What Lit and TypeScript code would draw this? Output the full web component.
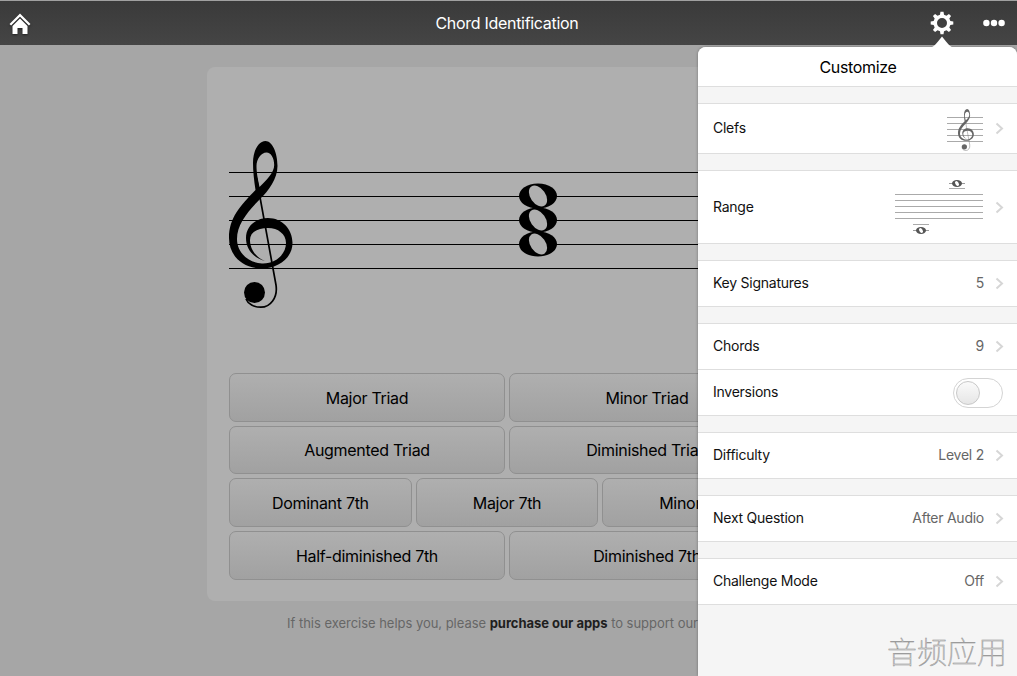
import { LitElement, html, css, svg } from "lit";
import { customElement } from "lit/decorators.js";

const CLEF = svg`
  <path fill-rule="evenodd" d="M265 261C254 258 246 250 246 238C246 226 256 218 268 218C282 218 292.5 229 292.5 243C292.5 258 278 268.5 262 268.5C243 268.5 229 256 229 238C229 218 240 206 255.5 190C254 180 253 171 253 163C253 150 259 141 265.5 141C272 141 277.5 152 277.5 166C277.5 179 268 191 261 198C248 211 237 224 237 239C237 253 249 263 262 263.5C276 264 286 254 286 243C286 234 278 228 268 228C258 228 250 232 250 240C250 250 257 258 265 261ZM266.5 152.5C261 152.5 256.5 159 256.5 166C256.5 172 257.5 178 259.5 187C267 180 274.2 172 274.2 165C274.2 158 271 152.5 266.5 152.5Z"/>
  <path d="M256.5 178L276 285C278 298 270 307.2 261 307.2C254 307.2 248 304 246 299" fill="none" stroke="currentColor" stroke-width="1.7"/>
  <circle cx="254.5" cy="292.5" r="10.5"/>
`;

function gearPath(cx: number, cy: number, outer: number, root: number, hole: number, teeth: number) {
  const pts: string[] = [];
  const step = (Math.PI * 2) / teeth;
  for (let i = 0; i < teeth; i++) {
    const a = i * step - Math.PI / 2;
    const list: [number, number][] = [
      [a - step * 0.3, root],
      [a - step * 0.17, outer],
      [a + step * 0.17, outer],
      [a + step * 0.3, root],
    ];
    for (const [t, r] of list) {
      pts.push(`${(cx + Math.cos(t) * r).toFixed(2)} ${(cy + Math.sin(t) * r).toFixed(2)}`);
    }
  }
  return `M${pts.join("L")}Z M${cx - hole} ${cy}a${hole} ${hole} 0 1 0 ${hole * 2} 0a${hole} ${hole} 0 1 0 ${-hole * 2} 0Z`;
}

type Row = { label: string; value?: string; kind?: "clef" | "range" | "toggle"; h?: number };
const GROUPS: Row[][] = [
  [{ label: "Clefs", kind: "clef", h: 49 }],
  [{ label: "Range", kind: "range", h: 72 }],
  [{ label: "Key Signatures", value: "5" }],
  [{ label: "Chords", value: "9" }, { label: "Inversions", kind: "toggle" }],
  [{ label: "Difficulty", value: "Level 2" }],
  [{ label: "Next Question", value: "After Audio" }],
  [{ label: "Challenge Mode", value: "Off" }],
];

const BUTTON_ROWS = [
  ["Major Triad", "Minor Triad"],
  ["Augmented Triad", "Diminished Triad"],
  ["Dominant 7th", "Major 7th", "Minor 7th"],
  ["Half-diminished 7th", "Diminished 7th"],
];

@customElement("app-root")
export class AppRoot extends LitElement {
  static styles = css`
    :host {
      display: block;
      position: relative;
      width: 1017px;
      height: 676px;
      overflow: hidden;
      background: #a6a6a6;
      font-family: Inter, "Noto Sans", sans-serif;
      color: #000;
    }
    .bar {
      height: 44px;
      border-top: 1px solid #a0a0a0;
      background: linear-gradient(#3a3a3a, #454545);
      display: flex;
      align-items: center;
      justify-content: space-between;
      color: #fff;
      position: relative;
    }
    .title {
      position: absolute;
      left: 0;
      right: 3px;
      text-align: center;
      font-size: 16px;
      letter-spacing: -0.3px;
    }
    .home { display: block; margin-left: 8px; filter: drop-shadow(0 1px 1px rgba(0,0,0,.5)); }
    .tools { display: flex; align-items: center; gap: 29px; margin-right: 12px; }
    .tools svg { display: block; }
    main {
      width: 600px;
      margin: 22px 0 0 207px;
    }
    .card {
      background: #afafaf;
      border-radius: 8px;
      padding: 22px;
      height: 534px;
      box-sizing: border-box;
    }
    .staff { display: block; width: 556px; height: 284px; color: #000; }
    .btns { display: flex; flex-direction: column; gap: 4px; }
    .brow { display: flex; gap: 4px; }
    .btn {
      flex: 1 1 0;
      height: 48.67px;
      box-sizing: border-box;
      border: 1px solid #909090;
      border-radius: 7px;
      background: linear-gradient(#afafaf, #a1a1a1);
      font-size: 16px;
      letter-spacing: -0.3px;
      display: flex;
      align-items: center;
      justify-content: center;
      white-space: nowrap;
      color: #000;
      padding-top: 0.6px;
    }
    .foot {
      text-align: center;
      font-size: 13px;
      letter-spacing: -0.03px;
      color: #666;
      margin-top: 14px;
      line-height: 17px;
      white-space: nowrap;
    }
    .foot b { color: #1f1f1f; font-weight: 700; }
    .panel {
      position: absolute;
      left: 698px;
      top: 47px;
      right: 0;
      bottom: 0;
      background: #f5f5f5;
      border-radius: 8px 8px 0 0;
      box-shadow: 0 0 3px rgba(0,0,0,.35);
    }
    .arrow { position: absolute; left: 230px; top: -13px; display: block; }
    .phead {
      height: 39px;
      background: #fff;
      border-bottom: 1px solid #dedede;
      border-radius: 8px 8px 0 0;
      display: flex;
      align-items: center;
      justify-content: center;
      font-size: 16px;
      letter-spacing: -0.35px;
      padding-left: 1px;
    }
    .group {
      margin-top: 16px;
      background: #fff;
      border-top: 1px solid #dedede;
      border-bottom: 1px solid #dedede;
    }
    .row {
      height: 45px;
      display: flex;
      align-items: center;
      padding: 0 13px 0 15px;
      font-size: 14px;
      letter-spacing: -0.25px;
    }
    .row + .row { border-top: 1px solid #dedede; }
    .label { flex: 1; color: #111; margin-top: -2px; }
    .value { color: #666; margin-top: -2px; }
    .chev { margin-left: 11px; display: block; }
    .icon { display: block; }
    .toggle {
      width: 50px;
      height: 30px;
      box-sizing: border-box;
      border: 1px solid #d4d4d4;
      border-radius: 15px;
      background: #fff;
      display: flex;
      align-items: center;
      padding-left: 2px;
      margin-right: 1px;
    }
    .knob {
      width: 24px;
      height: 24px;
      box-sizing: border-box;
      border-radius: 50%;
      border: 1px solid #c8c8c8;
      background: linear-gradient(#fafafa, #e6e6e6);
    }
    .mark {
      position: absolute;
      right: 10px;
      bottom: 6px;
      font-family: "Noto Sans CJK SC", sans-serif;
      font-size: 30px;
      font-weight: 100;
      line-height: 40px;
      color: #fff;
      -webkit-text-stroke: 0.5px #8a8a8a;
    }
  `;

  private chevron() {
    return html`<svg class="chev" width="9" height="13" viewBox="0 0 9 13">
      <path d="M1.5 1.5L7 6.5L1.5 11.5" fill="none" stroke="#d6d6d6" stroke-width="2"/>
    </svg>`;
  }

  private clefIcon() {
    return html`<svg class="icon" width="37" height="44" viewBox="0 0 37 44">
      ${[10.5, 16.5, 22.5, 28.5, 34.5].map(
        (y) => svg`<line x1="0" x2="36" y1="${y}" y2="${y}" stroke="#aaa"/>`
      )}
      <g transform="translate(10 1.2) scale(.25) translate(-225 -138)" fill="#666" color="#666">
        ${CLEF}
      </g>
    </svg>`;
  }

  private rangeIcon() {
    const note = (x: number, y: number) => svg`
      <ellipse cx="${x}" cy="${y}" rx="5" ry="3.4" fill="#555"/>
      <ellipse cx="${x}" cy="${y}" rx="1.7" ry="2.7" fill="#fff" transform="rotate(-30 ${x} ${y})"/>`;
    return html`<svg class="icon" width="89" height="60" viewBox="0 0 89 60">
      ${[17, 23, 29, 35, 41].map(
        (y) => svg`<line x1="0" x2="88" y1="${y + 0.5}" y2="${y + 0.5}" stroke="#aaa"/>`
      )}
      <line x1="54" x2="70" y1="6.5" y2="6.5" stroke="#999"/>
      <line x1="54" x2="70" y1="11.5" y2="11.5" stroke="#aaa"/>
      ${note(62, 6.5)}
      <line x1="18" x2="34" y1="47.5" y2="47.5" stroke="#aaa"/>
      <line x1="18" x2="34" y1="53.5" y2="53.5" stroke="#999"/>
      ${note(26, 53.5)}
    </svg>`;
  }

  private renderRow(r: Row) {
    return html`<div class="row" style=${r.h ? `height:${r.h}px` : ""}>
      <span class="label">${r.label}</span>
      ${r.value ? html`<span class="value">${r.value}</span>` : ""}
      ${r.kind === "clef" ? this.clefIcon() : ""}
      ${r.kind === "range" ? this.rangeIcon() : ""}
      ${r.kind === "toggle"
        ? html`<div class="toggle"><div class="knob"></div></div>`
        : this.chevron()}
    </div>`;
  }

  private staff() {
    const note = (y: number) => svg`
      <path d="M309 ${y - 12.5}c11 0 19 5.6 19 12.5s-8 12.5-19 12.5s-19-5.6-19-12.5s8-12.5 19-12.5Z"/>`;
    const hollow = (y: number) => svg`
      <ellipse cx="309" cy="${y}" rx="7.6" ry="11.6" fill="#afafaf" transform="rotate(-35 309 ${y})"/>`;
    return html`<svg class="staff" viewBox="0 0 556 284">
      ${[83.5, 107.5, 131.5, 155.5, 179.5].map(
        (y) => svg`<line x1="0" x2="556" y1="${y}" y2="${y}" stroke="#000"/>`
      )}
      <g transform="translate(-229 -89)" fill="currentColor">${CLEF}</g>
      <g fill="#000">${note(107)}${note(131)}${note(155)}</g>
      ${hollow(107)}${hollow(131)}${hollow(155)}
    </svg>`;
  }

  render() {
    return html`
      <header class="bar">
        <div class="title">Chord Identification</div>
        <svg class="home" width="24" height="24" viewBox="0 0 24 24">
          <path d="M12 2.5L1.5 13l1.6 1.6L12 5.7l8.9 8.9 1.6-1.6Z" fill="#fff"/>
          <path d="M4.5 15L12 7.6l7.5 7.4V23h-5v-6h-5v6h-5Z" fill="#fff"/>
        </svg>
        <div class="tools">
          <svg width="24" height="24" viewBox="0 0 24 24">
            <path d="${gearPath(12, 12, 11.4, 8.6, 5, 8)}" fill="#fff" fill-rule="evenodd"/>
          </svg>
          <svg width="22" height="8" viewBox="0 0 22 8">
            <circle cx="3.4" cy="4" r="3.2" fill="#fff"/>
            <circle cx="11" cy="4" r="3.2" fill="#fff"/>
            <circle cx="18.6" cy="4" r="3.2" fill="#fff"/>
          </svg>
        </div>
      </header>
      <main>
        <div class="card">
          ${this.staff()}
          <div class="btns">
            ${BUTTON_ROWS.map(
              (row) => html`<div class="brow">
                ${row.map((b) => html`<div class="btn">${b}</div>`)}
              </div>`
            )}
          </div>
        </div>
        <div class="foot">
          If this exercise helps you, please <b>purchase our apps</b> to support our site.
        </div>
      </main>
      <aside class="panel">
        <svg class="arrow" width="28" height="14" viewBox="0 0 28 14">
          <path d="M0 14C5 14 7 11 10 7.5L14 2.5L18 7.5C21 11 23 14 28 14Z" fill="#fff"/>
        </svg>
        <div class="phead">Customize</div>
        ${GROUPS.map((g) => html`<div class="group">${g.map((r) => this.renderRow(r))}</div>`)}
        <div class="mark">音频应用</div>
      </aside>
    `;
  }
}
